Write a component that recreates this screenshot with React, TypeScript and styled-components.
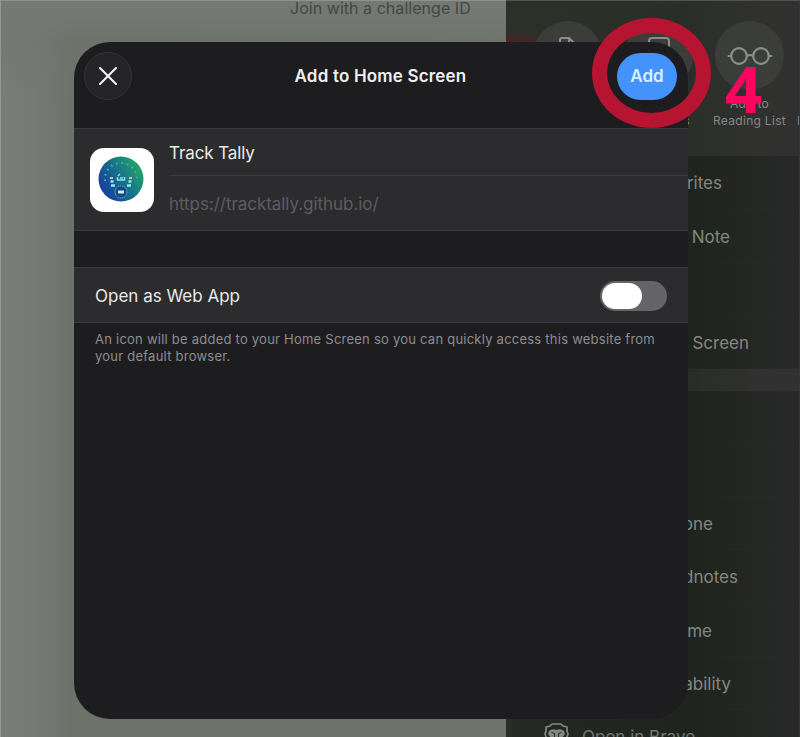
import React from "react";
import styled, { createGlobalStyle } from "styled-components";

const Global = createGlobalStyle`
  * { box-sizing: border-box; }
  body { margin: 0; background: #737772; font-family: Inter, "Liberation Sans", sans-serif; }
`;

const Screen = styled.div`
  position: relative;
  width: 800px;
  height: 737px;
  overflow: hidden;
`;

const Backdrop = styled.div`
  display: flex;
  height: 100%;
`;

const Page = styled.div`
  width: 506px;
  padding-left: 289px;
  border-top: 1px solid #8e928d;
  border-left: 1px solid #949893;
  background:
    linear-gradient(180deg, #757a76 0, rgba(112, 116, 110, 0.5) 42px, rgba(112, 116, 110, 0) 100px),
    linear-gradient(90deg, #7a7c79 0, #757a76 34px, #6c7169 74px, #6f736c 100%);
`;

const JoinText = styled.div`
  margin-top: -3px;
  font-size: 16px;
  line-height: 20px;
  letter-spacing: 0.04px;
  white-space: nowrap;
  color: #444744;
`;

const Sheet = styled.div`
  flex: 1;
  min-width: 0;
  display: flex;
  flex-direction: column;
  overflow: hidden;
  border-top: 1px solid #505350;
  border-right: 1px solid #353735;
  background: linear-gradient(90deg, #2b2e28 0, #242822 15px, #20241e 188px, #232622 235px, #272828 275px, #282828 100%);
`;

const ShareActions = styled.div`
  display: flex;
  flex-shrink: 0;
  height: 155px;
  padding: 20px 0 0 16px;
  background:
    radial-gradient(ellipse 34px 12px at 8px 42px, rgba(100, 20, 30, 0.55), rgba(100, 20, 30, 0)),
    linear-gradient(90deg, #2c3029 0, #2a2e28 180px, #30312f 250px, #303030 100%);
`;

const Action = styled.div`
  display: flex;
  flex-direction: column;
  align-items: center;
  flex-shrink: 0;
  width: 91px;
  font-size: 12px;
  line-height: 17px;
  letter-spacing: 0.3px;
  text-align: center;
  white-space: nowrap;
  color: #868886;
`;

const NextAction = styled(Action)`
  align-items: flex-start;
  padding: 91px 0 0 2px;
`;

const LabelEnd = styled.span`
  align-self: flex-end;
  margin: 17px 14px 0 0;
`;

const ActionCircle = styled.div`
  display: grid;
  place-items: center;
  flex-shrink: 0;
  width: 69px;
  height: 69px;
  margin-bottom: 5px;
  border-radius: 50%;
  background: #3b3d3a;
`;

const MenuRow = styled.div<{ $h: number; $end: number; $tint?: boolean }>`
  display: flex;
  flex-shrink: 0;
  align-items: center;
  justify-content: flex-end;
  height: ${(p) => p.$h}px;
  padding-top: 1px;
  padding-right: ${(p) => p.$end}px;
  border-bottom: 1px solid rgba(255, 255, 255, 0.012);
  font-size: 17px;
  white-space: nowrap;
  color: #858785;
  background: ${(p) => (p.$tint ? "linear-gradient(90deg, #2a2d27 188px, #303130 250px)" : "none")};
`;

const BraveRow = styled.div`
  display: flex;
  flex-shrink: 0;
  align-items: flex-start;
  gap: 13px;
  height: 60px;
  padding: 13px 0 0 38px;
  font-size: 17px;
  line-height: 28px;
  white-space: nowrap;
  color: #747674;
`;

const Modal = styled.section`
  position: absolute;
  left: 74px;
  top: 42px;
  width: 614px;
  height: 677px;
  overflow: hidden;
  border-radius: 36px;
  background: #1d1d1f;
`;

const Header = styled.header`
  display: grid;
  grid-template-columns: 48px 1fr 60px;
  align-items: center;
  height: 86px;
  padding: 0 11px 18px 10px;
`;

const CloseButton = styled.button`
  display: grid;
  place-items: center;
  width: 48px;
  height: 48px;
  padding: 0 1px 0 0;
  border: 1px solid #353537;
  border-radius: 50%;
  background: #252527;
`;

const Title = styled.h1`
  margin: 0 0 0 12px;
  font-size: 17px;
  font-weight: 600;
  letter-spacing: 0.18px;
  text-align: center;
  white-space: nowrap;
  color: #f0f0f1;
`;

const AddButton = styled.button`
  width: 60px;
  height: 47px;
  padding: 0;
  border: 0;
  border-radius: 24px;
  background: #4493fc;
  color: #d9f1ff;
  font: 600 17px Inter, sans-serif;
`;

const SiteCard = styled.div`
  display: flex;
  gap: 15px;
  height: 103px;
  padding-left: 16px;
  border-top: 1px solid #3a3a3c;
  border-bottom: 1px solid #3a3a3c;
  background: #2c2c2e;
`;

const AppIcon = styled.div`
  display: grid;
  place-items: center;
  flex-shrink: 0;
  width: 64px;
  height: 64px;
  margin-top: 19px;
  padding: 0 2px 2px 0;
  border-radius: 14px;
  background: #fff;
`;

const Fields = styled.div`
  flex: 1;
`;

const Field = styled.div<{ $muted?: boolean }>`
  height: ${(p) => (p.$muted ? 54 : 47)}px;
  line-height: ${(p) => (p.$muted ? 57 : 48)}px;
  border-bottom: ${(p) => (p.$muted ? "0" : "1px solid #3d3d3f")};
  font-size: 17px;
  letter-spacing: ${(p) => (p.$muted ? -0.05 : -0.1)}px;
  color: ${(p) => (p.$muted ? "#5d5d60" : "#ebebec")};
`;

const ToggleRow = styled.div`
  display: flex;
  align-items: center;
  justify-content: space-between;
  height: 56px;
  margin-top: 36px;
  padding: 1px 21px 0 21px;
  border-top: 1px solid #3a3a3c;
  border-bottom: 1px solid #3a3a3c;
  background: #2c2c2e;
  font-size: 17px;
  color: #e8e8e9;
`;

const Switch = styled.div`
  width: 67px;
  height: 30px;
  padding: 2px;
  border-radius: 15px;
  background: #656568;
`;

const Knob = styled.div`
  width: 40px;
  height: 26px;
  border-radius: 13px;
  background: #fff;
`;

const Note = styled.p`
  margin: 8px 0 0 21px;
  font-size: 13px;
  line-height: 17px;
  letter-spacing: 0.235px;
  white-space: pre-line;
  color: #8d8d91;
`;

const Ring = styled.div`
  position: absolute;
  left: 592px;
  top: 18px;
  width: 119px;
  height: 110px;
  border: 15px solid #b71432;
  border-radius: 50%;
`;

const StepNumber = styled.div`
  position: absolute;
  left: 725px;
  top: 53px;
  font: 700 65px/70px "Noto Sans", sans-serif;
  color: #ff0560;
`;

const CloseIcon = () => (
  <svg width="20" height="20" viewBox="0 0 20 20" stroke="#f2f2f3" strokeWidth="2.1" strokeLinecap="round">
    <path d="M2 2 18 18M18 2 2 18" />
  </svg>
);

const GlassesIcon = () => (
  <svg width="46" height="20" viewBox="0 0 46 20" fill="none" stroke="#8b8d8b" strokeWidth="2.2" strokeLinecap="round">
    <circle cx="12" cy="10" r="7.8" />
    <circle cx="34" cy="10" r="7.8" />
    <path d="M20 10q3-2 6 0M1.500 10H4M42 10h2.500" />
  </svg>
);

const DocIcon = () => (
  <svg width="22" height="42" viewBox="0 0 22 42" fill="none" stroke="#8b8d8b" strokeWidth="2">
    <path d="M3 40V5q0-2 2-2h7l6 6v31M12 3v7h7" />
  </svg>
);

const BookIcon = () => (
  <svg width="24" height="42" viewBox="0 0 24 42" fill="none" stroke="#8b8d8b" strokeWidth="2">
    <path d="M2 39V6q0-3 3-3h14q3 0 3 3v33" />
  </svg>
);

const BraveIcon = () => (
  <svg width="25" height="27" viewBox="0 0 25 27" fill="none" stroke="#858785" strokeWidth="1.7" strokeLinejoin="round">
    <path d="m8 1-2 2-4 1v4L1 11l4 11 7.500 4L20 22l4-11-1-3V4l-4-1-2-2Z" />
    <path d="M5 8q3-3 7.500-1Q17 5 20 8l1 3-3 4-3 1 1 4h-7l1-4-3-1-3-4Z" fill="#858785" stroke="none" />
    <path d="M7.500 9.500l3 1v4M17.500 9.500l-3 1v4" stroke="#242722" strokeWidth="1" />
  </svg>
);

const GaugeIcon = () => (
  <svg width="46" height="46" viewBox="0 0 46 46">
    <defs>
      <linearGradient id="dial" x1="0.1" y1="0.75" x2="0.9" y2="0.25">
        <stop offset="0" stopColor="#1741a0" />
        <stop offset="0.5" stopColor="#166f8d" />
        <stop offset="1" stopColor="#22a06b" />
      </linearGradient>
    </defs>
    <circle cx="23" cy="23" r="22.500" fill="url(#dial)" />
    <path d="M7 25V23a16 16 0 0 1 32 0v2" fill="none" stroke="#5bae9f" strokeWidth="2" strokeDasharray="1.500 4" />
    <path d="M20 20l2-2M19.500 21v3h7v-3M22 22h3" fill="none" stroke="#83e5df" strokeWidth="1.500" />
    <path d="M12 22h3M31 22h3" stroke="#e8b59b" strokeWidth="2" />
    <path d="M12.500 25.500h3M13 29.500h4M30.500 25.500h3M29 29.500h4" stroke="#8ee9ed" strokeWidth="2.400" />
    <circle cx="23" cy="36" r="6" fill="#164984" stroke="#6cb4c7" strokeWidth="1" strokeDasharray="1.500 .7" />
    <path d="M20 36h6" stroke="#cce8f4" strokeWidth="3" />
  </svg>
);

export default function App() {
  return (
    <Screen>
      <Global />
      <Backdrop>
        <Page><JoinText>Join with a challenge ID</JoinText></Page>
        <Sheet>
          <ShareActions>
            <Action><ActionCircle><DocIcon /></ActionCircle></Action>
            <Action><ActionCircle><BookIcon /></ActionCircle><LabelEnd>s</LabelEnd></Action>
            <Action><ActionCircle><GlassesIcon /></ActionCircle>Add to<br />Reading List</Action>
            <NextAction>E</NextAction>
          </ShareActions>
          <MenuRow $h={54} $end={77}>rites</MenuRow>
          <MenuRow $h={53} $end={69}>Note</MenuRow>
          <MenuRow $h={53} $end={70} />
          <MenuRow $h={53} $end={50}>Screen</MenuRow>
          <MenuRow $h={22} $end={0} $tint />
          <MenuRow $h={53} $end={0} />
          <MenuRow $h={53} $end={0} />
          <MenuRow $h={53} $end={86}>one</MenuRow>
          <MenuRow $h={54} $end={61}>dnotes</MenuRow>
          <MenuRow $h={53} $end={87}>me</MenuRow>
          <MenuRow $h={53} $end={68}>ability</MenuRow>
          <BraveRow><BraveIcon />Open in Brave</BraveRow>
        </Sheet>
      </Backdrop>
      <Modal>
        <Header>
          <CloseButton aria-label="Close"><CloseIcon /></CloseButton>
          <Title>Add to Home Screen</Title>
          <AddButton>Add</AddButton>
        </Header>
        <SiteCard>
          <AppIcon><GaugeIcon /></AppIcon>
          <Fields>
            <Field>Track Tally</Field>
            <Field $muted>https://tracktally.github.io/</Field>
          </Fields>
        </SiteCard>
        <ToggleRow>Open as Web App<Switch><Knob /></Switch></ToggleRow>
        <Note>{"An icon will be added to your Home Screen so you can quickly access this website from\nyour default browser."}</Note>
      </Modal>
      <Ring />
      <StepNumber>4</StepNumber>
    </Screen>
  );
}
